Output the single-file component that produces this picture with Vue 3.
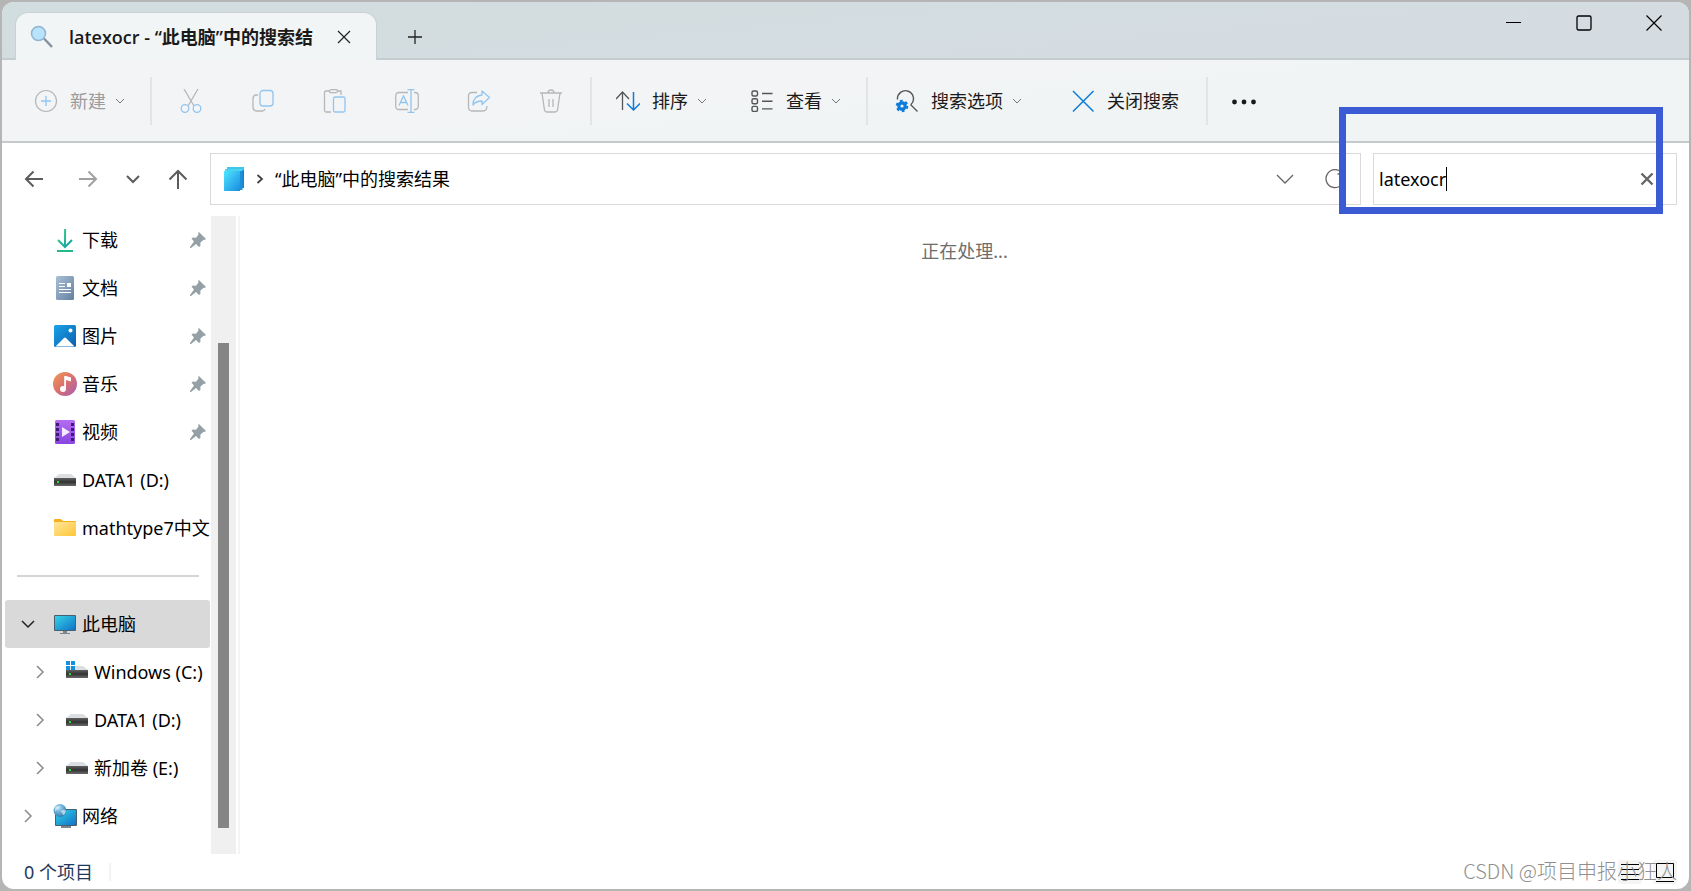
<script setup>
import { ref } from 'vue'

const query = ref('latexocr')

const pinned = [
  { label: '下载', icon: 'download', pin: true },
  { label: '文档', icon: 'document', pin: true },
  { label: '图片', icon: 'picture', pin: true },
  { label: '音乐', icon: 'music', pin: true },
  { label: '视频', icon: 'video', pin: true },
  { label: 'DATA1 (D:)', icon: 'drive' },
  { label: 'mathtype7中文', icon: 'folder' },
]

const tree = [
  { label: '此电脑', icon: 'pc', level: 0, open: true },
  { label: 'Windows (C:)', icon: 'windrive', level: 1 },
  { label: 'DATA1 (D:)', icon: 'drive', level: 1 },
  { label: '新加卷 (E:)', icon: 'drive', level: 1 },
  { label: '网络', icon: 'network', level: 0 },
]
</script>

<template>
  <div class="desktop">
    <svg class="defs" aria-hidden="true">
      <defs>
        <linearGradient id="g-teal" x1="0" y1="0" x2="1" y2="1"><stop offset="0" stop-color="#3ccf7c" /><stop offset="1" stop-color="#0f9fae" /></linearGradient>
        <linearGradient id="g-doc" x1="0" y1="0" x2="1" y2="1"><stop offset="0" stop-color="#a9bfd8" /><stop offset="1" stop-color="#64809f" /></linearGradient>
        <linearGradient id="g-pic" x1="0" y1="0" x2="1" y2="1"><stop offset="0" stop-color="#1aa3e8" /><stop offset="1" stop-color="#0a5fb0" /></linearGradient>
        <linearGradient id="g-music" x1="0" y1="0" x2="1" y2="1"><stop offset="0" stop-color="#f39a55" /><stop offset=".5" stop-color="#d9706e" /><stop offset="1" stop-color="#a45cb8" /></linearGradient>
        <linearGradient id="g-video" x1="0" y1="0" x2="0" y2="1"><stop offset="0" stop-color="#b46cf2" /><stop offset="1" stop-color="#8a45e0" /></linearGradient>
        <linearGradient id="g-folder" x1="0" y1="0" x2="1" y2="1"><stop offset="0" stop-color="#ffe59a" /><stop offset="1" stop-color="#ffc637" /></linearGradient>
        <linearGradient id="g-pc" x1="0" y1="0" x2="1" y2="1"><stop offset="0" stop-color="#35d3e6" /><stop offset="1" stop-color="#0f72c8" /></linearGradient>
        <linearGradient id="g-drive" x1="0" y1="0" x2="0" y2="1"><stop offset="0" stop-color="#5f5f5f" /><stop offset=".5" stop-color="#333" /><stop offset="1" stop-color="#6a6a6a" /></linearGradient>
        <linearGradient id="g-stack" x1="0" y1="0" x2="1" y2="1"><stop offset="0" stop-color="#4ee6ff" /><stop offset="1" stop-color="#1a8be0" /></linearGradient>
        <radialGradient id="g-globe" cx=".4" cy=".3" r=".8"><stop offset="0" stop-color="#a8dcf5" /><stop offset="1" stop-color="#246fa8" /></radialGradient>

        <symbol id="chev" viewBox="0 0 12 12"><path d="M2 4l4 4 4-4" fill="none" stroke="currentColor" stroke-width="1" /></symbol>

        <symbol id="download" viewBox="0 0 24 24"><g fill="none" stroke="url(#g-teal)" stroke-width="2"><path d="M12.1 1L12 19M5 12l7 7 7-7" /></g><path d="M4 22h16v2H4z" fill="#25b88c" /></symbol>
        <symbol id="document" viewBox="0 0 24 24">
          <rect x="3" y="0" width="18" height="24" rx="1.5" fill="url(#g-doc)" />
          <path d="M6 7.5h6M6 10.500h6M6 13.500h12M6 16.500h12" stroke="#fff" stroke-width="1.200" /><rect x="14" y="7" width="4" height="4" fill="#fff" />
        </symbol>
        <symbol id="picture" viewBox="0 0 24 24">
          <rect x="1" y="1" width="22" height="22" rx="1.500" fill="url(#g-pic)" />
          <path d="M2.500 22.500l8.500-8.500q1-1 2 0l8.500 8.500z" fill="#fff" /><circle cx="17.500" cy="6.500" r="2" fill="#fff" />
        </symbol>
        <symbol id="music" viewBox="0 0 24 24">
          <circle cx="12" cy="12" r="12" fill="url(#g-music)" />
          <circle cx="10" cy="17" r="3" fill="#fff" /><path d="M11.200 17V4l1.800 0 5 1.500v4L13 8v9z" fill="#fff" />
        </symbol>
        <symbol id="video" viewBox="0 0 24 24">
          <rect x="2" y="0" width="20" height="24" rx="1.500" fill="url(#g-video)" />
          <g fill="#3c1c74"><path d="M3 3h3v3H3zM3 8h3v3H3zM3 13h3v3H3zM3 18h3v3H3zM18 3h3v3h-3zM18 8h3v3h-3zM18 13h3v3h-3zM18 18h3v3h-3z" /></g>
          <path d="M9 7l8 5-8 5z" fill="#f3ecff" />
        </symbol>
        <symbol id="drive" viewBox="0 0 24 24">
          <path d="M6 6h12l5 4H1z" fill="#dcdfe2" /><rect x="1" y="10" width="22" height="8" fill="url(#g-drive)" /><rect x="4" y="13" width="2" height="2" fill="#2bdc2b" />
        </symbol>
        <symbol id="windrive" viewBox="0 0 24 24">
          <path d="M6 6h12l5 4H1z" fill="#dcdfe2" /><rect x="1" y="10" width="22" height="8" fill="url(#g-drive)" /><rect x="4" y="13" width="2" height="2" fill="#2bdc2b" />
          <path d="M1 1h4v4H1zM6 1h4v4H6zM1 6h4v4H1zM6 6h4v4H6z" fill="#1490df" />
        </symbol>
        <symbol id="folder" viewBox="0 0 24 24">
          <path d="M1 4q0-1 1-1h6l2 2h12q1 0 1 1v3H1z" fill="#f5b021" /><rect x="1" y="6" width="22" height="14" rx="1" fill="url(#g-folder)" />
        </symbol>
        <symbol id="pc" viewBox="0 0 24 24">
          <path d="M10 18h4v3h3v1H7v-1h3z" fill="#7c858c" /><rect x="1" y="3" width="22" height="16" rx="1" fill="#47606f" /><rect x="2" y="4" width="20" height="14" fill="url(#g-pc)" />
        </symbol>
        <symbol id="network" viewBox="0 0 24 24">
          <path d="M11 20h4v2h3v2H8v-2h3z" fill="#7c858c" /><rect x="2" y="5" width="22" height="17" rx="1" fill="#47606f" /><rect x="3" y="6" width="20" height="15" fill="url(#g-pc)" />
          <circle cx="7" cy="6.500" r="6.500" fill="url(#g-globe)" /><path d="M2 3q3-2 5 0-1 3-3 3t-2 3M8 7q3-2 5 0-1 4-3 4z" fill="#d9f1fa" opacity=".7" />
        </symbol>
        <symbol id="pin" viewBox="0 0 18 18"><path d="M10 1l7 7-1.500 1-1-.2-3.200 3 .2 3-1.500 1.200-3-3L2 17H1v-1l4-5.500L2.500 7.800 4 6.500l3 .2L9.500 3.500 9.200 2z" fill="#95a0a6" /></symbol>
      </defs>
    </svg>

    <main class="window">
      <header class="tabs">
        <div class="tab">
          <svg class="i24" viewBox="0 0 24 24">
            <path d="M14 13.500l8 8.500" stroke="#8593a0" stroke-width="2.500" /><circle cx="8.500" cy="8.500" r="7" fill="#b9e2fb" stroke="#8fb5cf" stroke-width="1.500" />
          </svg>
          <span class="tab-title">latexocr - “此电脑”中的搜索结</span>
          <button class="tab-close" aria-label="关闭标签页"><svg width="14" height="14" viewBox="0 0 14 14"><path d="M1 1l12 12M13 1L1 13" stroke="#222" stroke-width="1.200" /></svg></button>
        </div>
        <button class="tab-add" aria-label="新建标签页"><svg width="16" height="16" viewBox="0 0 16 16"><path d="M8 1v14M1 8h14" stroke="#222" stroke-width="1.300" /></svg></button>
        <div class="controls">
          <button aria-label="最小化"><svg width="16" height="16" viewBox="0 0 16 16"><path d="M0 7.500h15" stroke="#000" /></svg></button>
          <button aria-label="最大化"><svg width="16" height="16" viewBox="0 0 16 16"><rect x="1" y="1" width="14" height="14" rx="1.500" fill="none" stroke="#000" stroke-width="1.300" /></svg></button>
          <button aria-label="关闭"><svg width="16" height="16" viewBox="0 0 16 16"><path d="M.5 .5l15 15M15.500 .5l-15 15" stroke="#000" stroke-width="1.200" /></svg></button>
        </div>
      </header>

      <div class="toolbar">
        <button class="cmd off">
          <svg class="i24" viewBox="0 0 24 24" fill="none"><circle cx="12" cy="12" r="10.500" stroke="#b5b7b9" stroke-width="1.200" /><path d="M12 7v10M7 12h10" stroke="#92c5ee" stroke-width="1.300" /></svg>
          新建 <svg class="chev"><use href="#chev" /></svg>
        </button>
        <i class="sep"></i>
        <button class="tool" disabled aria-label="剪切"><svg class="i24" viewBox="0 0 24 24" fill="none" stroke-width="1.300"><path d="M5 0l10 17M19 0L9 17" stroke="#b5b7b9" /><g stroke="#92c5ee"><circle cx="6" cy="19.500" r="3.800" /><circle cx="18" cy="19.500" r="3.800" /></g></svg></button>
        <button class="tool" disabled aria-label="复制"><svg class="i24" viewBox="0 0 24 24" fill="none" stroke-width="1.300"><path d="M7 6H5.500Q2 6 2 9.500V18Q2 22 6 22h5Q13.500 22 14 20" stroke="#b5b7b9" /><rect x="9" y="1.500" width="13" height="15.500" rx="3" stroke="#92c5ee" /></svg></button>
        <button class="tool" disabled aria-label="粘贴"><svg class="i24" viewBox="0 0 24 24" fill="none" stroke-width="1.300"><path d="M7 2H3Q1.500 2 1.500 3.500v18Q1.500 23 3 23h5M14 2h4v4" stroke="#b5b7b9" /><rect x="6.500" y=".7" width="8" height="3" rx="1.500" stroke="#b5b7b9" /><rect x="10.500" y="8" width="11.500" height="15" rx="1.500" stroke="#92c5ee" /></svg></button>
        <button class="tool" disabled aria-label="重命名"><svg class="i24" viewBox="0 0 24 24" fill="none" stroke-width="1.300"><path d="M13 3.500H4Q.7 3.500 .7 7v10Q.7 20.500 4 20.500h9M19 3.500h1Q23.300 3.500 23.300 7v10q0 3.500-3.300 3.500h-1" stroke="#b5b7b9" /><path d="M4 16.500L8.500 7 13 16.500M5.500 13.500h6M12.500 .7h7M12.500 23.300h7M16 1v22" stroke="#92c5ee" /></svg></button>
        <button class="tool" disabled aria-label="共享"><svg class="i24" viewBox="0 0 24 24" fill="none" stroke-width="1.300"><path d="M10 3.500H5Q1.500 3.500 1.500 7v11Q1.500 22 5 22h11q4 0 4-5" stroke="#b5b7b9" /><path d="M15 2l7.500 6.500L15 15.500V12q-6 0-9 4 0-9 9-10z" stroke="#92c5ee" stroke-linejoin="round" /></svg></button>
        <button class="tool" disabled aria-label="删除"><svg class="i24" viewBox="0 0 24 24" fill="none" stroke="#b5b7b9" stroke-width="1.300"><path d="M1 4h22M3 4l2.500 17Q6 23 8 23h8q2 0 2.500-2L21 4M9 4q0-3 3-3t3 3M10 10v8M14 10v8" /></svg></button>
        <i class="sep"></i>
        <button class="cmd">
          <svg class="i24" viewBox="0 0 24 24" fill="none" stroke-width="1.300"><path d="M6.500 21V3M0 10l6.500-7L13 10" stroke="#555" /><path d="M17.500 3v18M11 14.500l6.500 6.500 6.500-6.500" stroke="#0a7cdb" stroke-width="1.500" /></svg>
          排序 <svg class="chev"><use href="#chev" /></svg>
        </button>
        <button class="cmd">
          <svg class="i24" viewBox="0 0 24 24" fill="none" stroke="#555" stroke-width="1.400"><rect x="2" y="2" width="5.500" height="5" rx="1.500" /><rect x="2" y="9.700" width="5.500" height="5" rx="1.500" /><rect x="2" y="17.400" width="5.500" height="5" rx="1.500" /><path d="M12 4.500h10.500M12 12.200h10.500M12 19.900h10.500" /></svg>
          查看 <svg class="chev"><use href="#chev" /></svg>
        </button>
        <i class="sep"></i>
        <div class="group">
          <button class="cmd">
            <svg class="i24" viewBox="0 0 24 24" fill="none"><path d="M2.500 10.500A8 8 0 1 1 16 15.500M15.500 15.500l7 7" stroke="#555" stroke-width="1.400" /><circle cx="7" cy="17" r="3.200" stroke="#0a7cdb" stroke-width="3.200" /><circle cx="7" cy="17" r="5.300" stroke="#0a7cdb" stroke-width="2" stroke-dasharray="2.750 2.800" /></svg>
            搜索选项 <svg class="chev"><use href="#chev" /></svg>
          </button>
          <button class="cmd">
            <svg class="i24" viewBox="0 0 24 24"><path d="M2 2l20.500 20.500M22.500 2L2 22.500" stroke="#0a7cdb" stroke-width="1.500" /></svg>
            关闭搜索
          </button>
        </div>
        <i class="sep"></i>
        <button class="more" aria-label="更多"><svg class="i24" viewBox="0 0 24 24" fill="#1a1a1a"><circle cx="2.500" cy="13" r="2.400" /><circle cx="12" cy="13" r="2.400" /><circle cx="21.500" cy="13" r="2.400" /></svg></button>
      </div>

      <div class="navrow">
        <button class="nav wide" aria-label="后退"><svg width="20" height="20" viewBox="0 0 20 20"><path d="M19 10H2M9.500 2.500L2 10l7.500 7.500" /></svg></button>
        <button class="nav wide dim" aria-label="前进"><svg width="20" height="20" viewBox="0 0 20 20"><path d="M1 10h17M10.500 2.500L18 10l-7.500 7.500" /></svg></button>
        <button class="nav" aria-label="最近位置"><svg width="14" height="14" viewBox="0 0 14 14"><path d="M1 4l6 6 6-6" /></svg></button>
        <button class="nav wide" aria-label="上移"><svg width="20" height="20" viewBox="0 0 20 20"><path d="M10 20V2M1.500 10.500L10 2l8.500 8.500" /></svg></button>
        <div class="address">
          <svg class="i24" viewBox="0 0 24 24"><path d="M5 0h17v21H5z" fill="#1a7fcf" /><path d="M5 0h17v3H5z" fill="#3cc8ea" /><path d="M3.500 2h17v21h-17z" fill="#1b92da" /><path d="M3.500 2h17v2h-17z" fill="#49d5f0" /><path d="M2 4h16v20H2z" fill="url(#g-stack)" /></svg>
          <svg class="crumb" viewBox="0 0 8 12"><path d="M1.500 2L6 6l-4.500 4" fill="none" stroke="#444" stroke-width="1.800" /></svg>
          <a href="#" class="path">“此电脑”中的搜索结果</a>
          <button class="in" aria-label="展开地址"><svg width="18" height="18" viewBox="0 0 18 18"><path d="M1 5l8 8 8-8" fill="none" stroke="#666" stroke-width="1.300" /></svg></button>
          <button class="in" aria-label="刷新"><svg width="20" height="20" viewBox="0 0 20 20"><path d="M17 4A9 9 0 1 0 19 10M17.500 0v5h-5" fill="none" stroke="#666" stroke-width="1.300" /></svg></button>
        </div>
        <div class="search">
          <input v-model="query" type="text" aria-label="搜索" />
          <i class="caret"></i>
          <button class="clear" aria-label="清除"><svg width="14" height="14" viewBox="0 0 14 14"><path d="M1.500 1.500l11 11M12.500 1.500l-11 11" stroke="#666" stroke-width="2.400" /></svg></button>
        </div>
      </div>

      <div class="body">
        <nav class="side">
          <ul>
            <li v-for="p in pinned" :key="p.label">
              <a href="#" class="row"><span class="tw"></span><svg class="i24"><use :href="'#' + p.icon" /></svg><span class="label">{{ p.label }}</span><svg v-if="p.pin" class="pin"><use href="#pin" /></svg></a>
            </li>
          </ul>
          <div class="rule"></div>
          <ul>
            <li v-for="t in tree" :key="t.label">
              <a href="#" class="row" :class="{ child: t.level, active: t.open }">
                <span class="tw">
                  <svg v-if="t.open" width="14" height="14" viewBox="0 0 14 14"><path d="M1 4l6 6 6-6" fill="none" stroke="#222" stroke-width="1.500" /></svg>
                  <svg v-else width="14" height="14" viewBox="0 0 14 14"><path d="M4 1l6 6-6 6" fill="none" stroke="#8a8a8a" stroke-width="1.500" /></svg>
                </span>
                <svg class="i24"><use :href="'#' + t.icon" /></svg><span class="label">{{ t.label }}</span>
              </a>
            </li>
          </ul>
        </nav>
        <div class="scroll"><div class="thumb"></div></div>
        <section class="content">正在处理...</section>
      </div>

      <footer class="status">
        <span class="count">0 个项目</span>
        <button aria-label="详细信息"><svg width="18" height="18" viewBox="0 0 18 18"><path d="M0 1.500h18M0 6.500h18M0 11.500h18M0 16.500h18" stroke="#000" /></svg></button>
        <button aria-label="大图标"><svg width="18" height="20" viewBox="0 0 18 20"><path d="M.5 1.500h17v14H.5zM0 19.500h18" fill="none" stroke="#000" /></svg></button>
      </footer>
    </main>
    <div class="highlight"></div>
    <div class="watermark">CSDN @项目申报小狂人</div>
  </div>
</template>

<style>
body { overflow: hidden; }
</style>

<style scoped>
.desktop { position: relative; box-sizing: border-box; height: 100vh; padding: 2px; background: #b5b5b5; font: 18px/24px "Noto Sans", "Noto Sans CJK SC", sans-serif; color: #000; }
.defs { position: absolute; width: 0; height: 0; }
.window { display: flex; flex-direction: column; height: 100%; border-radius: 12px; overflow: hidden; background: #fff; }
button { display: flex; align-items: center; justify-content: center; padding: 0; border: 0; background: none; font: inherit; color: inherit; }
a { color: inherit; text-decoration: none; }
ul { list-style: none; margin: 0; padding: 0; }
svg { flex: none; display: block; }
.i24 { width: 24px; height: 24px; }

.tabs { display: flex; flex: none; height: 58px; box-sizing: border-box; padding-left: 14px; background: linear-gradient(175deg, #d2dddf, #d5dce1); box-shadow: inset 0 -2px #c3cccf; }
.tab { display: flex; align-items: center; box-sizing: border-box; width: 360px; margin-top: 11px; padding: 0 24px 0 14px; border-radius: 12px 12px 0 0; background: #f1f5f6; box-shadow: 0 0 0 1px #c9d1d4; clip-path: inset(-2px -2px 0 -2px); }
.tab-title { flex: 1; margin-left: 15px; font-family: "Open Sans", "Noto Sans CJK SC", sans-serif; font-weight: 600; white-space: nowrap; overflow: hidden; color: #1a1a1a; }
.tab-close { width: 16px; height: 24px; }
.tab-add { width: 48px; margin: 11px 0 0 15px; }
.controls { display: flex; margin-left: auto; height: 41px; }
.controls button { width: 70px; }

.toolbar { display: flex; flex: none; align-items: center; height: 81px; padding-left: 11px; background: linear-gradient(175deg, #f3f4f5 40%, #f0f4f5 60%); border-bottom: 2px solid #c5cbcc; color: #1a1a1a; }
.cmd { gap: 12px; height: 48px; padding: 0 21px; white-space: nowrap; }
.cmd .chev { margin-left: -4px; }
.chev { width: 12px; height: 12px; color: #777; }
.off { color: #9a9c9e; }
.sep { flex: none; width: 2px; height: 48px; margin: 0 3px; background: #e2e5e6; }
.tool { width: 72px; height: 48px; }
.group { display: flex; gap: 6px; margin: 0 3px; }
.more { width: 66px; height: 48px; }

.navrow { display: flex; flex: none; height: 52px; padding: 10px 12px 0 5px; }
.nav { width: 36px; }
.nav.wide { width: 54px; }
.nav svg { fill: none; stroke: #5c5c5c; stroke-width: 2; }
.nav.dim svg { stroke: #a0a0a0; }
.address, .search { display: flex; align-items: center; box-sizing: border-box; height: 52px; border: 1px solid #d9d9d9; }
.address { flex: 1; margin: 0 12px 0 5px; padding-left: 11px; }
.crumb { width: 8px; height: 12px; margin: 0 11px 0 10px; }
.path { flex: 1; white-space: nowrap; }
.in { width: 50px; height: 50px; }
.search { width: 304px; padding: 0 21px 0 5px; }
.search input { field-sizing: content; min-width: 0; padding: 0; border: 0; outline: 0; background: none; font: inherit; color: #000; }
.caret { flex: none; width: 1px; height: 24px; background: #000; }
.clear { width: 16px; height: 24px; margin-left: auto; }

.body { display: flex; flex: 1; min-height: 0; padding-top: 11px; }
.side { width: 208px; flex: none; overflow: hidden; }
.row { display: flex; align-items: center; height: 48px; margin-left: 3px; box-sizing: border-box; padding: 0 3px 0 16px; white-space: nowrap; }
.row.child { padding-left: 28px; }
.row.active { background: #d9d9d9; border-radius: 3px; }
.tw { flex: none; width: 14px; margin-right: 18px; }
.label { flex: 1; margin-left: 5px; }
.pin { width: 18px; height: 18px; }
.rule { height: 2px; margin: 23px 11px 23px 15px; background: #d5d5d5; }
.scroll { flex: none; box-sizing: border-box; width: 25px; margin-left: 1px; padding: 127px 7px 26px; background: #f0f0f0; }
.thumb { height: 100%; background: #858585; }
.content { flex: 1; margin-left: 2px; padding: 23px 0 0; border-left: 2px solid #f5f5f5; text-align: center; color: #6d6d6d; }

.status { display: flex; flex: none; align-items: center; height: 35px; padding: 0 12px 0 22px; color: #1e395b; }
.count { padding-right: 16px; border-right: 2px solid #f3f3f3; margin-right: auto; line-height: 18px; }
.status button { width: 24px; height: 24px; margin-left: 11px; border-radius: 3px; background: #f4f4f4; }

.highlight { position: absolute; top: 107px; right: 28px; box-sizing: border-box; width: 324px; height: 107px; border: 7px solid #3a5bd4; }
.watermark { position: absolute; right: 14px; bottom: 8px; font: 20px/24px "Noto Sans CJK SC", sans-serif; font-weight: 300; color: #8f8f8f; }
</style>
